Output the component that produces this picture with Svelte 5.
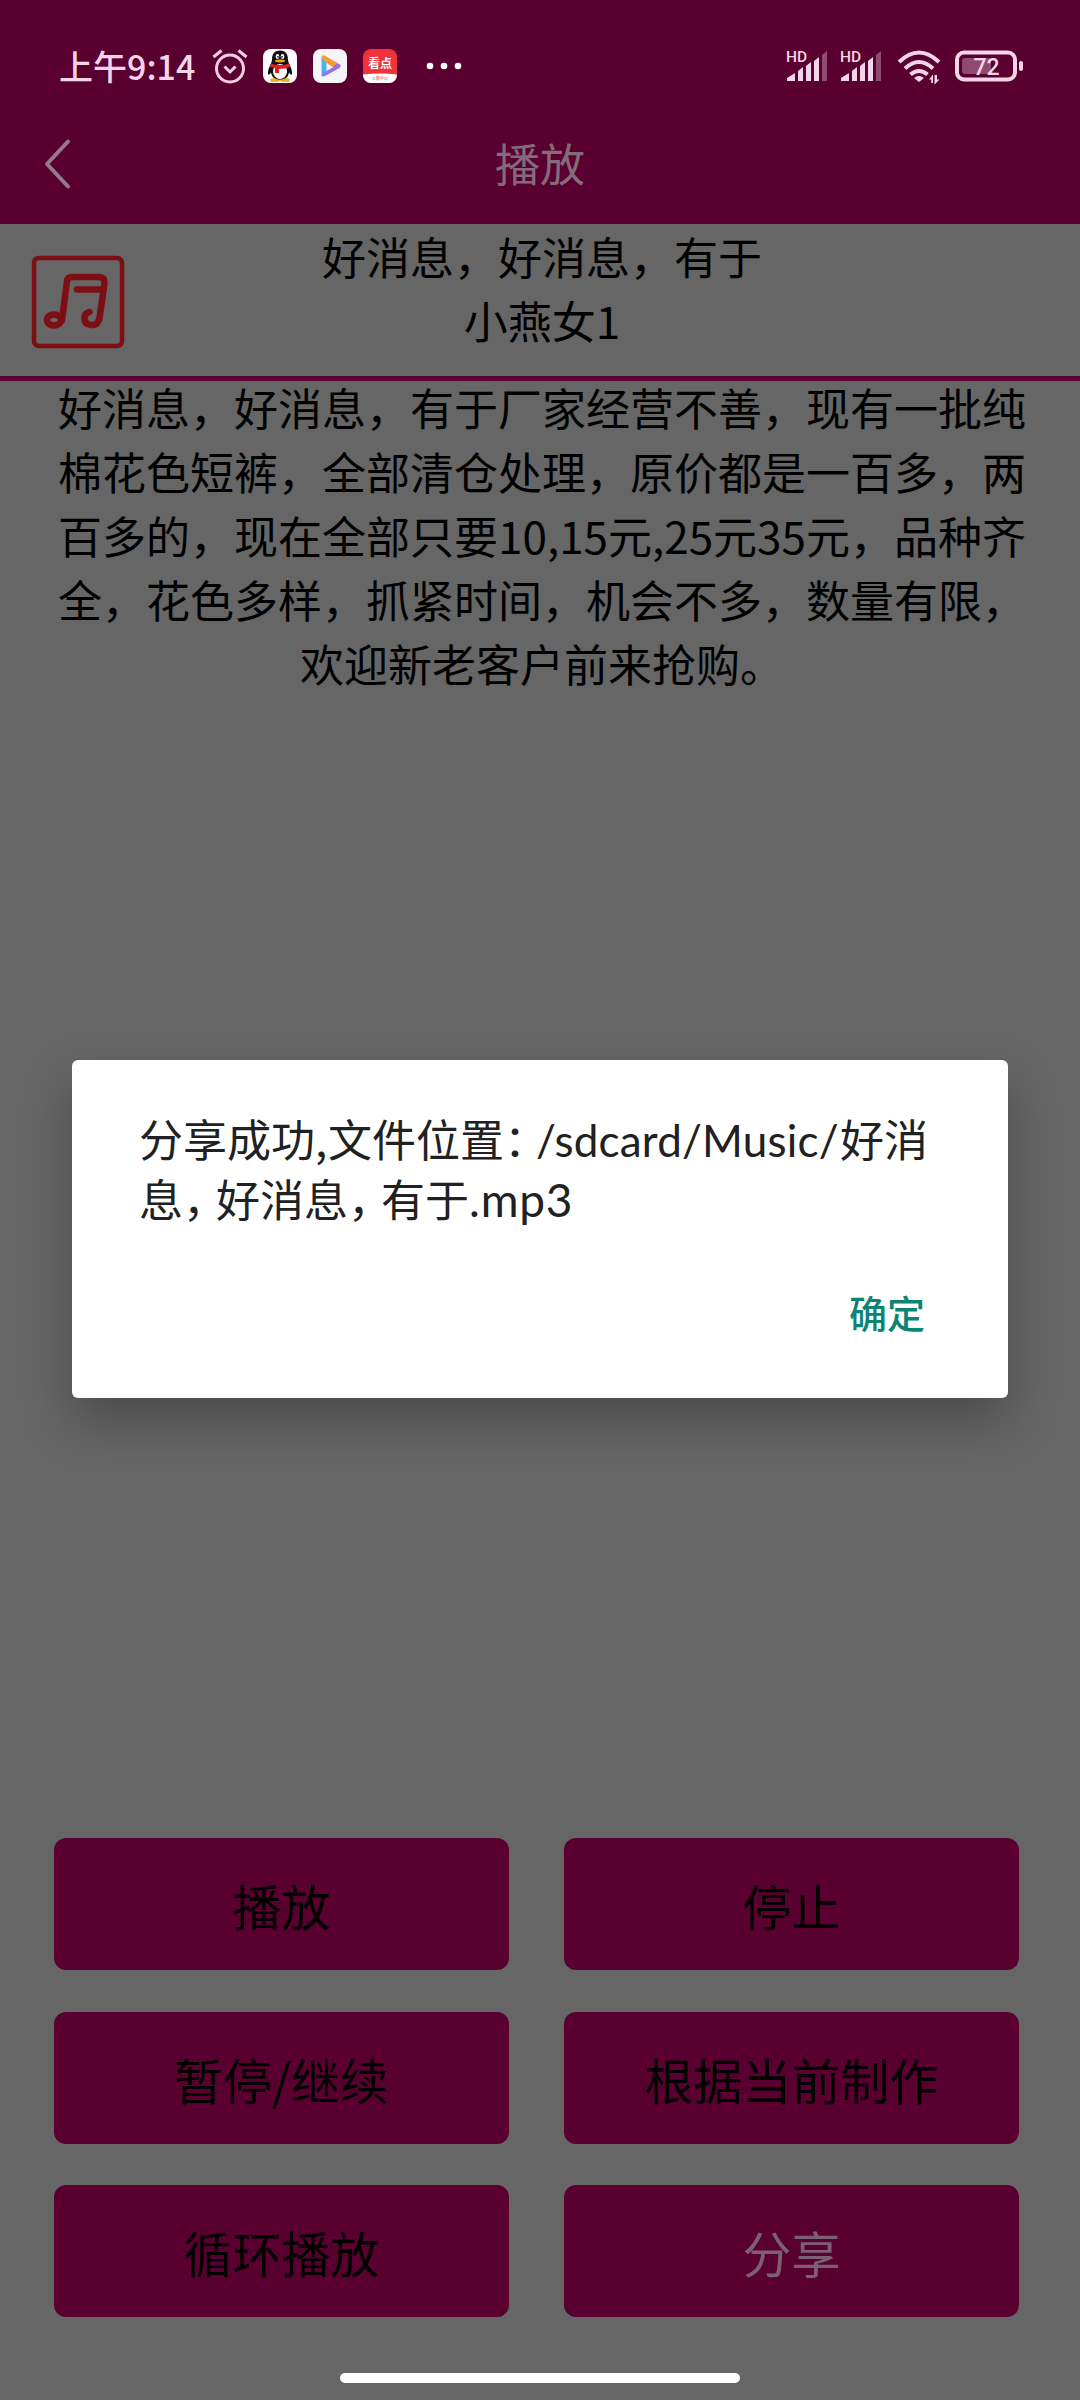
<script lang="ts">
  const title = '播放'
  const track = { name: '好消息，好消息，有于', voice: '小燕女1' }

  const lines = [
    '好消息，好消息，有于厂家经营不善，现有一批纯',
    '棉花色短裤，全部清仓处理，原价都是一百多，两',
    '百多的，现在全部只要10,15元,25元35元，品种齐',
    '全，花色多样，抓紧时间，机会不多，数量有限，',
    '欢迎新老客户前来抢购。',
  ]

  const actions = [
    { label: '播放' },
    { label: '停止' },
    { label: '暂停/继续' },
    { label: '根据当前制作' },
    { label: '循环播放' },
    { label: '分享', active: true },
  ]

  let dialogOpen = $state(true)
</script>

{#snippet signal()}
  <svg class="signal" width="42" height="40" viewBox="0 -8 42 40">
    <text x="-1" y="11.500" font-size="15.500">HD</text>
    <path d="M0 31v-3l8-5v8zM11 31V21l5-4v14zM19 31V16l5-4v19zM27 31V11l5-4v24z" />
    <path class="faint" d="M35 31V5l5-4v30z" />
  </svg>
{/snippet}

<div class="screen">
  <header>
    <div class="status">
      <span class="time">上午9:14</span>
      <svg class="alarm" width="36" height="36" viewBox="0 0 36 36">
        <circle cx="18" cy="20.500" r="13.500" />
        <path d="M12.500 18.500l5.500 5.500 5.500-5.500M1.500 9l8-6.500M34.500 9l-8-6.500" />
      </svg>
      <svg class="app" width="34" height="34" viewBox="0 0 34 34">
        <rect width="34" height="34" rx="8" fill="#fff" />
        <ellipse cx="12" cy="31" rx="5" ry="2" fill="#e9b320" />
        <ellipse cx="22" cy="31" rx="5" ry="2" fill="#e9b320" />
        <path d="M17 1.500c-6 0-8 4-8 9 0 4-4 8-4 13 0 3 1 3 3 0 1 5 4 7 9 7s8-2 9-7c2 3 3 3 3 0 0-5-4-9-4-13 0-5-2-9-8-9z" fill="#111" />
        <ellipse cx="17" cy="22.500" rx="7" ry="7.500" fill="#fff" />
        <path d="M8 14.500q9 3 18 0l1 3.500q-5 2-11 2v4h-4v-5l-5-1z" fill="#e02020" />
        <ellipse cx="14.500" cy="7.500" rx="1.800" ry="2.400" fill="#fff" />
        <ellipse cx="19.500" cy="7.500" rx="1.800" ry="2.400" fill="#fff" />
        <circle cx="15" cy="7.800" r=".9" fill="#111" />
        <circle cx="19" cy="7.800" r=".9" fill="#111" />
        <ellipse cx="17" cy="12" rx="5" ry="1.400" fill="#f2a51d" />
      </svg>
      <svg class="app" width="34" height="34" viewBox="0 0 34 34">
        <rect width="34" height="34" rx="8" fill="#f5f5f8" />
        <path d="M8.500 8l5 5v9l-3.500 5.500q-1.500 0-1.500-1.500z" fill="#48b4f1" />
        <path d="M8.500 8q.5-2.500 3-1.500l14 8-4.500 4.500-7.500-5z" fill="#f59a35" />
        <path d="M25.500 14.500q4 2 1 4.500L12 27q-3 1-3.500-1l5-4 8-4.500-1.500-1z" fill="#9571ee" />
      </svg>
      <svg class="app" width="34" height="34" viewBox="0 0 34 34">
        <rect width="34" height="34" rx="8" fill="#f2323a" />
        <path d="M0 25.500q17-2 34 0v.5a8 8 0 0 1-8 8H8a8 8 0 0 1-8-8z" fill="#fff" />
        <text class="app-name" x="17" y="19">看点</text>
        <text class="app-tag" x="17" y="31">火箭中心</text>
      </svg>
      <svg class="more" width="36" height="8" viewBox="0 0 36 8">
        <circle cx="4" cy="4" r="3.300" /><circle cx="18" cy="4" r="3.300" /><circle cx="32" cy="4" r="3.300" />
      </svg>
      <div class="system">
        {@render signal()}
        {@render signal()}
        <svg class="wifi" width="44" height="36" viewBox="0 0 44 36">
          <path class="arc" d="M2 12Q22-7 42 12M8 18.500Q22 5.500 36 18.500M13.500 24.500Q22 17.500 30.500 24.500" />
          <path d="M17 28q5-4 10 0l-5 4zM32 29.500l4-5V33h-1.800v-3.500zM37.500 25v9.500l5-5h-2.500V25z" />
        </svg>
        <svg class="battery" width="70" height="32" viewBox="0 0 70 32">
          <rect class="frame" x="2" y="2.500" width="58" height="27" rx="7" />
          <rect class="faint" x="7" y="8" width="29" height="16" rx="3" />
          <rect x="64" y="11" width="4" height="10" rx="2" />
          <text x="31.500" y="24.500" font-size="23">72</text>
        </svg>
      </div>
    </div>
    <nav>
      <svg class="back" width="32" height="52" viewBox="0 0 32 52">
        <path d="M28 3.500L7 26l21 22.500" />
      </svg>
      <h1>{title}</h1>
    </nav>
  </header>

  <section class="track">
    <svg class="note" width="94" height="94" viewBox="0 0 94 94">
      <rect x="3" y="3" width="88" height="88" rx="5" />
      <path class="tune" d="M31 65l5-39q.5-4 5-4h27q6 0 5.500 6L69 60q-1 11-9 10-7-1-6.500-7 0-5 5-6M46 34.500h26" />
      <ellipse class="tune" cx="23" cy="65" rx="7" ry="5.500" />
    </svg>
    <div class="info">
      <div>{track.name}</div>
      <div>{track.voice}</div>
    </div>
  </section>

  <main>
    {#each lines as line}
      <div>{line}</div>
    {/each}
  </main>

  <div class="actions">
    {#each actions as action}
      <button class:active={action.active}>{action.label}</button>
    {/each}
  </div>
  <div class="home-bar"></div>

  {#if dialogOpen}
    <div class="dialog" role="alertdialog">
      <div class="message">
        <div>分享成功<span class="comma">,</span>文件位置<span class="colon">：</span><span class="path">/sdcard/Music/</span>好消</div>
        <div>息<span class="pause">，</span>好消息<span class="pause">，</span>有于<span class="ext">.mp3</span></div>
      </div>
      <button class="confirm" onclick={() => (dialogOpen = false)}>确定</button>
    </div>
  {/if}
</div>

<style>
  :global(body) {
    margin: 0;
  }

  .screen {
    position: relative;
    display: flex;
    flex-direction: column;
    width: 1080px;
    height: 2400px;
    overflow: hidden;
    background: #666;
    color: #000;
    font-family: 'Noto Sans CJK SC', sans-serif;
    font-size: 44px;
    line-height: 64px;
    white-space: nowrap;
  }

  header {
    height: 224px;
    background: #5a0030;
  }

  .status {
    display: flex;
    align-items: center;
    height: 132px;
    padding: 0 55px 0 59px;
    box-sizing: border-box;
    color: #f4d5e8;
    fill: #f4d5e8;
  }

  .time {
    width: 137px;
    margin-right: 16px;
    font-size: 34px;
    font-weight: 500;
  }

  .alarm {
    margin-right: 15px;
    fill: none;
    stroke: #f4cde4;
    stroke-width: 3;
  }

  .app {
    margin-right: 16px;
  }

  .app-name {
    fill: #fff;
    font-size: 12px;
    font-weight: 700;
    text-anchor: middle;
  }

  .app-tag {
    fill: #d33;
    font-size: 4px;
    text-anchor: middle;
  }

  .more {
    margin-left: 13px;
    fill: #fff;
  }

  .system {
    display: flex;
    align-items: center;
    margin-left: auto;
  }

  .signal {
    margin: -8px 12px 0 0;
    overflow: visible;
  }

  .signal text,
  .battery text {
    font-family: Roboto, sans-serif;
    font-weight: 500;
  }

  .faint {
    opacity: 0.35;
  }

  .wifi {
    margin: 4px 14px 0 2px;
  }

  .wifi .arc {
    fill: none;
    stroke: #f4d5e8;
    stroke-width: 4;
  }

  .battery .frame {
    fill: none;
    stroke: #f4d5e8;
    stroke-width: 4;
  }

  .battery text {
    text-anchor: middle;
  }

  nav {
    display: grid;
    grid-template-columns: 40px 1fr 40px;
    align-items: center;
    height: 62px;
    padding: 0 40px;
  }

  .back {
    fill: none;
    stroke: #94788c;
    stroke-width: 4;
    stroke-linecap: round;
    stroke-linejoin: round;
  }

  h1 {
    margin: -1px 0 0;
    color: #836b7b;
    font-size: 45px;
    font-weight: 400;
    text-align: center;
  }

  .track {
    display: grid;
    grid-template-columns: 94px 1fr 94px;
    height: 152px;
    padding: 0 29px 0 31px;
    border-bottom: 5px solid #5a0030;
  }

  .note {
    margin-top: 31px;
    fill: none;
    stroke: #7d0f14;
    stroke-width: 4.5;
    stroke-linecap: round;
    stroke-linejoin: round;
  }

  .tune {
    stroke-width: 6.5;
  }

  .info {
    padding-left: 2px;
    text-align: center;
  }

  main {
    height: 1458px;
    margin-top: -6px;
    padding-left: 4px;
    text-align: center;
  }

  .actions {
    display: grid;
    grid-template-columns: 455px 455px;
    grid-auto-rows: 132px;
    gap: 41.5px 55px;
    padding: 5px 0 0 54px;
  }

  button {
    border: 0;
    padding: 1px 0 0;
    border-radius: 12px;
    background: #5a0030;
    color: #000;
    font-family: inherit;
    font-size: 49px;
  }

  button.active {
    color: #7b6074;
  }

  .home-bar {
    width: 400px;
    height: 10px;
    margin: 56px auto 0;
    border-radius: 5px;
    background: #fff;
  }

  .dialog {
    position: absolute;
    top: 1060px;
    left: 72px;
    display: flex;
    flex-direction: column;
    width: 936px;
    height: 338px;
    padding: 49px 83px 0 67px;
    box-sizing: border-box;
    border-radius: 6px;
    background: #fff;
    box-shadow: 0 24px 50px rgba(0, 0, 0, 0.26);
  }

  .message {
    color: #212121;
    line-height: 58px;
  }

  .message span {
    display: inline-block;
  }

  .comma {
    width: 13px;
  }

  .colon,
  .pause {
    font-feature-settings: 'halt';
  }

  .colon {
    width: 32px;
  }

  .path,
  .ext {
    font-family: Lato, sans-serif;
  }

  .path {
    width: 304px;
    letter-spacing: 0.2px;
  }

  .ext {
    font-size: 46px;
    letter-spacing: 0.8px;
  }

  .pause {
    width: 33px;
  }

  .confirm {
    align-self: flex-end;
    margin-top: 55px;
    padding: 0;
    background: none;
    color: #0b8474;
    font-size: 38px;
    font-weight: 500;
  }
</style>
